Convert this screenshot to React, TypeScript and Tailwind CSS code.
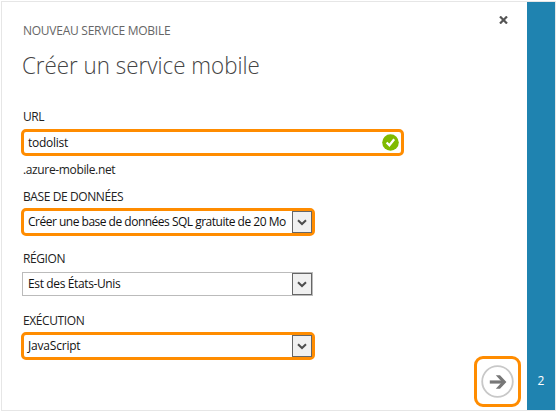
import type { ReactNode } from "react";

function Label({ children, className = "" }: { children: ReactNode; className?: string }) {
  return (
    <div className={`h-4 whitespace-nowrap pl-[2px] text-[12px] leading-4 text-[#222] ${className}`}>
      {children}
    </div>
  );
}

function DropButton() {
  return (
    <div className="flex h-[22px] w-5 shrink-0 items-center justify-center border border-[#666] bg-[#f0f0f0]">
      <svg width="10" height="8" viewBox="0 0 10 8" fill="none">
        <path d="M1 2.2 L5 6 L9 2.2" stroke="#4c4c4c" strokeWidth="2" />
      </svg>
    </div>
  );
}

function Select({ value, textClass, highlighted = false }: { value: string; textClass: string; highlighted?: boolean }) {
  return (
    <div
      className={
        highlighted
          ? "flex h-7 w-[294px] items-center justify-between rounded-[5px] border-[3px] border-[#ff8c00] bg-white pl-1"
          : "ml-px flex h-6 w-[291px] items-center justify-between border border-[#bbb] bg-white pl-[5px]"
      }
    >
      <span className={`whitespace-nowrap text-[12px] leading-4 text-[#111] ${textClass}`}>{value}</span>
      <DropButton />
    </div>
  );
}

export default function App() {
  return (
    <div className="h-[412px] w-[557px] bg-white p-px font-['Open_Sans','Noto_Sans',sans-serif]">
      <div className="flex h-[410px] w-[555px] border border-[#e6e6e6]">
        <main className="flex w-[525px] shrink-0 justify-between">
          <div className="flex flex-col pl-[19px]">
            <div className="mt-[21px] h-4 whitespace-nowrap pl-[2px] text-[12px] leading-4 tracking-[-0.26px] text-[#666]">
              NOUVEAU SERVICE MOBILE
            </div>
            <h1 className="mt-[10px] h-8 origin-left scale-x-[0.932] whitespace-nowrap pl-[1px] text-[24px] font-light leading-8 text-[#444]">
              Créer un service mobile
            </h1>
            <Label className="mt-[28px] tracking-[-0.4px]">URL</Label>
            <div className="mt-[4px] flex h-[27px] w-[383px] items-center justify-between rounded-[5px] border-[3px] border-[#ff8c00] pl-1 pr-[2px]">
              <span className="text-[12px] leading-4 tracking-[-0.25px] text-[#111]">todolist</span>
              <svg width="17" height="17" viewBox="0 0 17 17" fill="none">
                <circle cx="8.5" cy="8.5" r="8.3" fill="#7fba00" />
                <path d="M4.6 8.4 L7.4 11.3 L12.2 5.2" stroke="#fff" strokeWidth="2.2" />
              </svg>
            </div>
            <Label className="mt-[6px] tracking-[-0.36px]">.azure-mobile.net</Label>
            <Label className="mt-[11px] tracking-[-0.4px]">BASE DE DONNÉES</Label>
            <div className="mt-[3px]">
              <Select highlighted value="Créer une base de données SQL gratuite de 20 Mo" textClass="tracking-[-0.5px]" />
            </div>
            <Label className="mt-[15px] tracking-[-0.4px]">RÉGION</Label>
            <div className="mt-[5px]">
              <Select value="Est des États-Unis" textClass="tracking-[-0.37px]" />
            </div>
            <Label className="mt-[17px] tracking-[-0.4px]">EXÉCUTION</Label>
            <div className="mt-[3px]">
              <Select highlighted value="JavaScript" textClass="tracking-[-0.2px]" />
            </div>
          </div>
          <div className="flex flex-col items-end justify-between pb-[3px] pr-[6px]">
            <svg className="mr-[13px] mt-[14px]" width="9" height="8" viewBox="0 0 9 8" fill="none">
              <path d="M1 0.5 L8 7.5 M8 0.5 L1 7.5" stroke="#555" strokeWidth="2.2" />
            </svg>
            <div className="flex h-[51px] w-[47px] items-center justify-center rounded-[9px] border-[3px] border-[#ff8c00]">
              <svg width="33" height="33" viewBox="0 0 33 33" fill="none">
                <circle cx="16.5" cy="16.5" r="15.3" stroke="#c8c8c8" strokeWidth="1.8" />
                <path d="M8.8 17 H23" stroke="#777" strokeWidth="3.2" />
                <path d="M14.8 10.2 H19 L25.4 17 L19 23.8 H14.8 L21 17 Z" fill="#777" />
              </svg>
            </div>
          </div>
        </main>
        <aside className="flex w-7 flex-col items-center justify-end bg-[#1f83b0] pb-[21px] text-[12px] leading-4 text-white">
          2
        </aside>
      </div>
    </div>
  );
}
